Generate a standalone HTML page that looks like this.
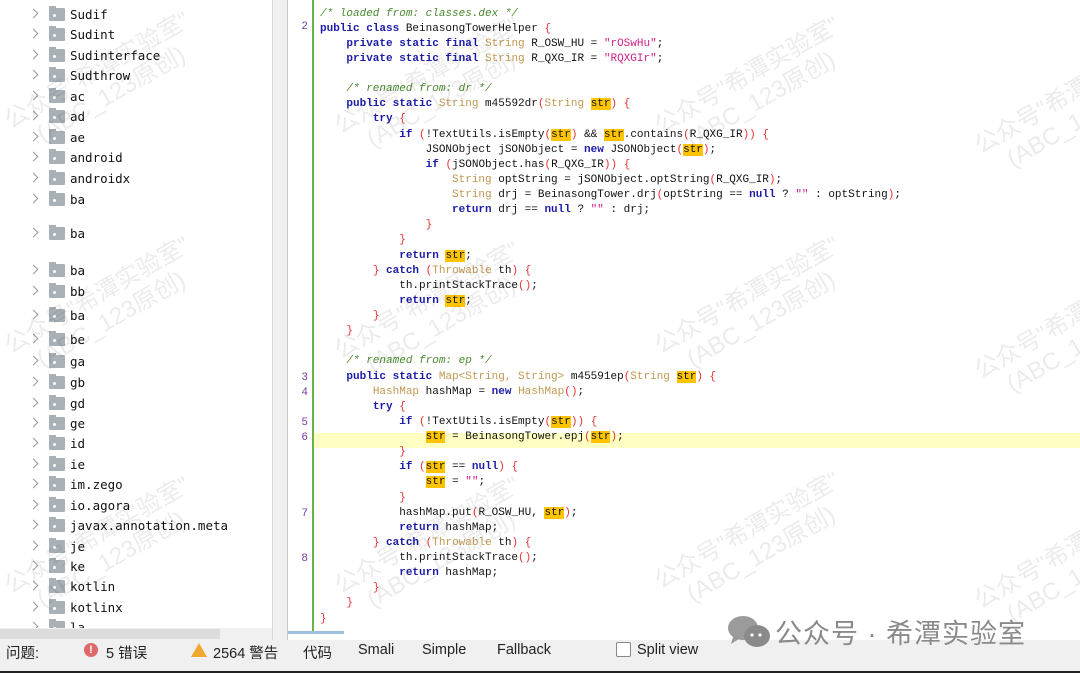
<!DOCTYPE html>
<html><head><meta charset="utf-8">
<style>
*{margin:0;padding:0;box-sizing:border-box}
body{width:1080px;height:673px;overflow:hidden;background:#fff;position:relative;font-family:"Liberation Sans","Noto Sans CJK SC",sans-serif}
#left{position:absolute;left:0;top:0;width:272px;height:628px;background:#fff;overflow:hidden}
.it{position:absolute;left:0;height:20px;width:272px}
.chev{position:absolute;left:30px;top:5px;width:7px;height:7px;border-right:1.6px solid #999;border-top:1.6px solid #999;transform:rotate(45deg)}
.fold{position:absolute;left:49px;top:3px;width:16px;height:13px;background:#a9b1b7;border-radius:1px}
.fold:before{content:"";position:absolute;left:0;top:-2px;width:7px;height:3px;background:#a9b1b7}
.fold:after{content:"";position:absolute;left:4px;top:6px;width:3px;height:3px;background:#fff;border-radius:50%}
.nm{position:absolute;left:70px;top:1px;font-family:"DejaVu Sans Mono","Liberation Mono",monospace;font-size:12.5px;color:#111;line-height:18px}
#sep{position:absolute;left:272px;top:0;width:16px;height:640px;background:#f0f0f0;border-left:1px solid #d8d8d8;border-right:1px solid #c8c8c8}
#hs{position:absolute;left:0;top:628px;width:272px;height:12px;background:#f0f0f0}
#hs div{position:absolute;left:0;top:1px;width:220px;height:10px;background:#dcdcdc}
#code{position:absolute;left:288px;top:0;width:792px;height:631px;background:#fff;overflow:hidden}
#gut{position:absolute;left:312px;top:0;width:1.5px;height:631px;background:#6ab04c}
#cur{position:absolute;left:313px;top:433px;width:767px;height:15px;background:#ffffc4}
.ln{position:absolute;left:288px;width:20px;text-align:right;font-family:"Liberation Mono",monospace;font-size:11px;color:#7a3aa8}
#lines{position:absolute;left:320px;top:6.5px;font-family:"Liberation Mono",monospace;font-size:11px;line-height:15.13px;white-space:pre;color:#111}
.k{color:#1c1ca8;font-weight:bold}.t{color:#c09850}.s{color:#d2208a}.c{color:#4a8a30;font-style:italic}.p{color:#e83030}.h{background:#ffc400}
#bar{position:absolute;left:0;top:640px;width:1080px;height:31px;background:#f0f0f0;font-size:14.5px;color:#222}
#bar span{position:absolute;top:2px}
#blue{position:absolute;left:288px;top:631px;width:56px;height:3px;background:#a0c0e0}
#bot{position:absolute;left:0;top:671px;width:1080px;height:2px;background:#222}
.wm{position:absolute;color:rgba(0,0,0,0.08);font-size:24px;transform:rotate(-30deg);white-space:nowrap;line-height:28px;text-align:center}
</style></head><body>
<div id="left">
<div class="it" style="top:5px"><i class="chev"></i><i class="fold"></i><span class="nm">Sudif</span></div>
<div class="it" style="top:25px"><i class="chev"></i><i class="fold"></i><span class="nm">Sudint</span></div>
<div class="it" style="top:46px"><i class="chev"></i><i class="fold"></i><span class="nm">Sudinterface</span></div>
<div class="it" style="top:66px"><i class="chev"></i><i class="fold"></i><span class="nm">Sudthrow</span></div>
<div class="it" style="top:87px"><i class="chev"></i><i class="fold"></i><span class="nm">ac</span></div>
<div class="it" style="top:107px"><i class="chev"></i><i class="fold"></i><span class="nm">ad</span></div>
<div class="it" style="top:128px"><i class="chev"></i><i class="fold"></i><span class="nm">ae</span></div>
<div class="it" style="top:148px"><i class="chev"></i><i class="fold"></i><span class="nm">android</span></div>
<div class="it" style="top:169px"><i class="chev"></i><i class="fold"></i><span class="nm">androidx</span></div>
<div class="it" style="top:190px"><i class="chev"></i><i class="fold"></i><span class="nm">ba</span></div>
<div class="it" style="top:224px"><i class="chev"></i><i class="fold"></i><span class="nm">ba</span></div>
<div class="it" style="top:261px"><i class="chev"></i><i class="fold"></i><span class="nm">ba</span></div>
<div class="it" style="top:282px"><i class="chev"></i><i class="fold"></i><span class="nm">bb</span></div>
<div class="it" style="top:306px"><i class="chev"></i><i class="fold"></i><span class="nm">ba</span></div>
<div class="it" style="top:330px"><i class="chev"></i><i class="fold"></i><span class="nm">be</span></div>
<div class="it" style="top:352px"><i class="chev"></i><i class="fold"></i><span class="nm">ga</span></div>
<div class="it" style="top:373px"><i class="chev"></i><i class="fold"></i><span class="nm">gb</span></div>
<div class="it" style="top:394px"><i class="chev"></i><i class="fold"></i><span class="nm">gd</span></div>
<div class="it" style="top:414px"><i class="chev"></i><i class="fold"></i><span class="nm">ge</span></div>
<div class="it" style="top:434px"><i class="chev"></i><i class="fold"></i><span class="nm">id</span></div>
<div class="it" style="top:455px"><i class="chev"></i><i class="fold"></i><span class="nm">ie</span></div>
<div class="it" style="top:475px"><i class="chev"></i><i class="fold"></i><span class="nm">im.zego</span></div>
<div class="it" style="top:496px"><i class="chev"></i><i class="fold"></i><span class="nm">io.agora</span></div>
<div class="it" style="top:516px"><i class="chev"></i><i class="fold"></i><span class="nm">javax.annotation.meta</span></div>
<div class="it" style="top:537px"><i class="chev"></i><i class="fold"></i><span class="nm">je</span></div>
<div class="it" style="top:557px"><i class="chev"></i><i class="fold"></i><span class="nm">ke</span></div>
<div class="it" style="top:577px"><i class="chev"></i><i class="fold"></i><span class="nm">kotlin</span></div>
<div class="it" style="top:598px"><i class="chev"></i><i class="fold"></i><span class="nm">kotlinx</span></div>
<div class="it" style="top:618px"><i class="chev"></i><i class="fold"></i><span class="nm">la</span></div>
</div>
<div id="hs"><div></div></div>
<div id="sep"></div>
<div id="code"></div>
<div id="cur"></div>
<div id="gut"></div>
<div class="ln" style="top:21px">2</div>
<div class="ln" style="top:372px">3</div>
<div class="ln" style="top:387px">4</div>
<div class="ln" style="top:417px">5</div>
<div class="ln" style="top:432px">6</div>
<div class="ln" style="top:508px">7</div>
<div class="ln" style="top:553px">8</div>
<div id="lines"><span class="c">/* loaded from: classes.dex */</span>
<span class="k">public class</span> BeinasongTowerHelper <span class="p">{</span>
    <span class="k">private static final</span> <span class="t">String</span> R_OSW_HU = <span class="s">"rOSwHu"</span>;
    <span class="k">private static final</span> <span class="t">String</span> R_QXG_IR = <span class="s">"RQXGIr"</span>;

    <span class="c">/* renamed from: dr */</span>
    <span class="k">public static</span> <span class="t">String</span> m45592dr<span class="p">(</span><span class="t">String</span> <span class="h">str</span><span class="p">)</span> <span class="p">{</span>
        <span class="k">try</span> <span class="p">{</span>
            <span class="k">if</span> <span class="p">(</span>!TextUtils.isEmpty<span class="p">(</span><span class="h">str</span><span class="p">)</span> &amp;&amp; <span class="h">str</span>.contains<span class="p">(</span>R_QXG_IR<span class="p">))</span> <span class="p">{</span>
                JSONObject jSONObject = <span class="k">new</span> JSONObject<span class="p">(</span><span class="h">str</span><span class="p">)</span>;
                <span class="k">if</span> <span class="p">(</span>jSONObject.has<span class="p">(</span>R_QXG_IR<span class="p">))</span> <span class="p">{</span>
                    <span class="t">String</span> optString = jSONObject.optString<span class="p">(</span>R_QXG_IR<span class="p">)</span>;
                    <span class="t">String</span> drj = BeinasongTower.drj<span class="p">(</span>optString == <span class="k">null</span> ? <span class="s">""</span> : optString<span class="p">)</span>;
                    <span class="k">return</span> drj == <span class="k">null</span> ? <span class="s">""</span> : drj;
                <span class="p">}</span>
            <span class="p">}</span>
            <span class="k">return</span> <span class="h">str</span>;
        <span class="p">}</span> <span class="k">catch</span> <span class="p">(</span><span class="t">Throwable</span> th<span class="p">)</span> <span class="p">{</span>
            th.printStackTrace<span class="p">()</span>;
            <span class="k">return</span> <span class="h">str</span>;
        <span class="p">}</span>
    <span class="p">}</span>

    <span class="c">/* renamed from: ep */</span>
    <span class="k">public static</span> <span class="t">Map&lt;String, String&gt;</span> m45591ep<span class="p">(</span><span class="t">String</span> <span class="h">str</span><span class="p">)</span> <span class="p">{</span>
        <span class="t">HashMap</span> hashMap = <span class="k">new</span> <span class="t">HashMap</span><span class="p">()</span>;
        <span class="k">try</span> <span class="p">{</span>
            <span class="k">if</span> <span class="p">(</span>!TextUtils.isEmpty<span class="p">(</span><span class="h">str</span><span class="p">))</span> <span class="p">{</span>
                <span class="h">str</span> = BeinasongTower.epj<span class="p">(</span><span class="h">str</span><span class="p">)</span>;
            <span class="p">}</span>
            <span class="k">if</span> <span class="p">(</span><span class="h">str</span> == <span class="k">null</span><span class="p">)</span> <span class="p">{</span>
                <span class="h">str</span> = <span class="s">""</span>;
            <span class="p">}</span>
            hashMap.put<span class="p">(</span>R_OSW_HU, <span class="h">str</span><span class="p">)</span>;
            <span class="k">return</span> hashMap;
        <span class="p">}</span> <span class="k">catch</span> <span class="p">(</span><span class="t">Throwable</span> th<span class="p">)</span> <span class="p">{</span>
            th.printStackTrace<span class="p">()</span>;
            <span class="k">return</span> hashMap;
        <span class="p">}</span>
    <span class="p">}</span>
<span class="p">}</span></div>

<div class="wm" style="left:0;top:55px">公众号"希潭实验室"<br>(ABC_123原创)</div>
<div class="wm" style="left:330px;top:60px">公众号"希潭实验室"<br>(ABC_123原创)</div>
<div class="wm" style="left:650px;top:60px">公众号"希潭实验室"<br>(ABC_123原创)</div>
<div class="wm" style="left:970px;top:80px">公众号"希潭实验室"<br>(ABC_123原创)</div>
<div class="wm" style="left:0;top:280px">公众号"希潭实验室"<br>(ABC_123原创)</div>
<div class="wm" style="left:330px;top:285px">公众号"希潭实验室"<br>(ABC_123原创)</div>
<div class="wm" style="left:650px;top:280px">公众号"希潭实验室"<br>(ABC_123原创)</div>
<div class="wm" style="left:970px;top:305px">公众号"希潭实验室"<br>(ABC_123原创)</div>
<div class="wm" style="left:0;top:520px">公众号"希潭实验室"<br>(ABC_123原创)</div>
<div class="wm" style="left:330px;top:520px">公众号"希潭实验室"<br>(ABC_123原创)</div>
<div class="wm" style="left:650px;top:515px">公众号"希潭实验室"<br>(ABC_123原创)</div>
<div class="wm" style="left:970px;top:535px">公众号"希潭实验室"<br>(ABC_123原创)</div>

<div id="blue"></div>
<div id="bar">
<span style="left:6px">问题:</span>
<span style="left:84px;top:3px;width:14px;height:14px;border-radius:50%;background:#e06a6a;color:#fff;font-size:11px;font-weight:bold;text-align:center;line-height:14px">!</span>
<span style="left:106px">5 错误</span>
<span style="left:191px;top:3px;width:0;height:0;border-left:8px solid transparent;border-right:8px solid transparent;border-bottom:14px solid #f0a830"></span>
<span style="left:213px">2564 警告</span>
<span style="left:303px">代码</span>
<span style="left:358px">Smali</span>
<span style="left:422px">Simple</span>
<span style="left:497px">Fallback</span>
<span style="left:616px;top:2px;width:15px;height:15px;border:1px solid #888;background:#fff;border-radius:2px"></span>
<span style="left:637px">Split view</span>
</div>
<div style="position:absolute;left:725px;top:612px;width:48px;height:40px">
<svg width="48" height="40" viewBox="0 0 48 40"><ellipse cx="18" cy="16" rx="15" ry="12" fill="#8a8a8a" opacity=".85"/><path d="M8 25 L6 32 L14 27Z" fill="#8a8a8a" opacity=".85"/><ellipse cx="32" cy="24" rx="13" ry="11" fill="#8a8a8a"/><circle cx="27" cy="23" r="1.6" fill="#fff"/><circle cx="35" cy="23" r="1.6" fill="#fff"/></svg>
</div>
<div style="position:absolute;left:775px;top:612px;font-size:27px;color:#8a8a8a;white-space:nowrap;letter-spacing:1px">公众号 · 希潭实验室</div>
<div id="bot"></div>
</body></html>
